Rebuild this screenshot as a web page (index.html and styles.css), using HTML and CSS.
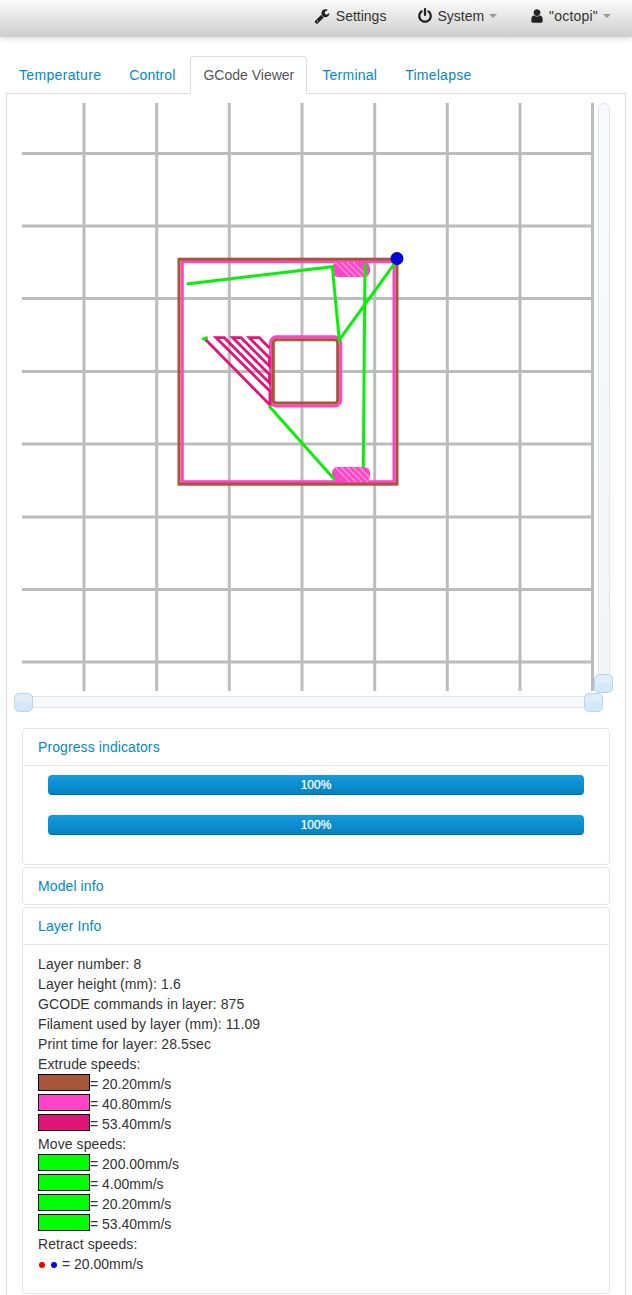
FILE: index.html
```html
<!DOCTYPE html>
<html lang="en">
<head>
<meta charset="utf-8">
<title>OctoPrint</title>
<link rel="stylesheet" href="styles.css">
</head>
<body>
<header class="navbar">
  <a class="nav-item nav-settings"><svg class="icon" viewBox="0 0 1792 1792"><path d="M448 1472q0-26-19-45t-45-19-45 19-19 45 19 45 45 19 45-19 19-45zm644-420l-682 682q-37 37-90 37-52 0-91-37l-106-108q-38-36-38-90 0-53 38-91l681-681q39 98 114.5 173.5t173.5 114.5zm634-435q0 39-23 106-47 134-164.5 217.5t-258.5 83.5q-185 0-316.5-131.5t-131.5-316.5 131.5-316.5 316.5-131.5q58 0 121.5 16.5t107.5 46.5q16 11 16 28t-16 28l-293 169v224l193 107q5-3 79-48.5t135.5-81 70.5-35.5q15 0 23.5 10t8.5 25z"/></svg>Settings</a>
  <a class="nav-item nav-system"><svg class="icon" viewBox="0 0 1792 1792"><path d="M1664 896q0 156-61 298t-164 245-245 164-298 61-298-61-245-164-164-245-61-298q0-182 80.5-343t226.5-270q43-32 95.5-25t83.5 50q32 42 24.5 94.5t-49.5 84.5q-98 74-151.5 181t-53.5 228q0 104 40.5 198.5t109.5 163.5 163.5 109.5 198.5 40.5 198.5-40.5 163.5-109.5 109.5-163.5 40.5-198.5q0-121-53.5-228t-151.5-181q-42-32-49.5-84.5t24.5-94.5q31-43 84-50t95 25q146 109 226.5 270t80.5 343zm-640-768v640q0 52-38 90t-90 38-90-38-38-90v-640q0-52 38-90t90-38 90 38 38 90z"/></svg>System<span class="caret"></span></a>
  <a class="nav-item nav-user"><svg class="icon" viewBox="0 0 1792 1792"><path d="M1536 1399q0 109-62.5 187t-150.5 78h-854q-88 0-150.5-78t-62.5-187q0-85 8.5-160.5t31.5-152 58.5-131 94-89 134.5-34.5q131 128 313 128t313-128q76 0 134.5 34.5t94 89 58.5 131 31.5 152 8.5 160.5zm-256-887q0 159-112.5 271.5t-271.5 112.5-271.5-112.5-112.5-271.5 112.5-271.5 271.5-112.5 271.5 112.5 112.5 271.5z"/></svg><span class="user-name">"octopi"</span><span class="caret"></span></a>
</header>

<main class="page">
  <ul class="tabs">
    <li><a class="tab tab-first">Temperature</a></li>
    <li><a class="tab tab-control">Control</a></li>
    <li><a class="tab tab-active">GCode Viewer</a></li>
    <li><a class="tab">Terminal</a></li>
    <li><a class="tab">Timelapse</a></li>
  </ul>

  <section class="tab-content">
    <div class="viewer">
      <svg class="canvas" viewBox="22 103 572 588" width="572" height="588">
        <g class="grid">
          <path d="M84 103V691M156.7 103V691M229.3 103V691M302 103V691M374.7 103V691M447.3 103V691M520 103V691M592.5 103V691"/>
          <path d="M22 153.5H592M22 226H592M22 298.5H592M22 371.5H592M22 444H592M22 517H592M22 589.5H592M22 662H592"/>
        </g>
        <g class="pink">
          <rect x="182.3" y="261.7" width="211.700" height="220"/>
          <rect x="270.500" y="336.700" width="70.200" height="69.300" rx="6"/>
        </g>
        <g class="brown">
          <rect x="179" y="259.200" width="218" height="225"/>
          <rect x="273.300" y="339.800" width="64.400" height="63.200" rx="3"/>
        </g>
        <path class="hatch" d="M204.300 338.300L270 405V391.200L216 337.700H224.300L269.500 382.900V374.500L232.700 337.700H241L269.500 366.200V357.900L249.300 337.700H259.300L269.500 347.900"/>
        <rect class="blob" x="332" y="262" width="38" height="15" rx="6"/>
        <rect class="blob" x="332" y="467" width="38" height="15" rx="6"/>
        <path class="blob-lines" d="M335 262L350 277M341 262L356 277M347 262L362 277M353 262L368 277M335 467L350 482M341 467L356 482M347 467L362 482M353 467L368 482M359 467L370 478"/>
        <path class="move" d="M202 339.300L207.700 337.300M186.700 284L332.300 266.700L339.300 340L398.300 258.300M365 263.300L363.300 467M269 406L335 480"/>
        <circle class="retract" cx="397" cy="258.500" r="6.500"/>
      </svg>
      <div class="vslider"><span class="handle handle-v"></span></div>
    </div>
    <div class="hslider"><span class="handle handle-h-left"></span><span class="handle handle-h-right"></span></div>

    <div class="accordion">
      <div class="group">
        <a class="group-heading">Progress indicators</a>
        <div class="group-inner">
          <div class="progress"><div class="bar">100%</div></div>
          <div class="progress"><div class="bar">100%</div></div>
        </div>
      </div>
      <div class="group">
        <a class="group-heading">Model info</a>
      </div>
      <div class="group">
        <a class="group-heading">Layer Info</a>
        <div class="group-inner">
          <div class="info">
            <div>Layer number: 8</div>
            <div>Layer height (mm): 1.6</div>
            <div>GCODE commands in layer: 875</div>
            <div>Filament used by layer (mm): 11.09</div>
            <div>Print time for layer: 28.5sec</div>
            <div>Extrude speeds:</div>
            <div class="speed"><span class="swatch swatch-brown"></span>= 20.20mm/s</div>
            <div class="speed"><span class="swatch swatch-pink"></span>= 40.80mm/s</div>
            <div class="speed"><span class="swatch swatch-magenta"></span>= 53.40mm/s</div>
            <div>Move speeds:</div>
            <div class="speed"><span class="swatch swatch-green"></span>= 200.00mm/s</div>
            <div class="speed"><span class="swatch swatch-green"></span>= 4.00mm/s</div>
            <div class="speed"><span class="swatch swatch-green"></span>= 20.20mm/s</div>
            <div class="speed"><span class="swatch swatch-green"></span>= 53.40mm/s</div>
            <div>Retract speeds:</div>
            <div class="speed speed-retract"><span class="dot dot-red"></span><span class="dot dot-blue"></span>= 20.00mm/s</div>
          </div>
        </div>
      </div>
    </div>
  </section>
</main>
</body>
</html>
```
FILE: styles.css
```css
html {
  overflow: hidden;
}

body {
  margin: 0;
  background: #fff;
  font-family: "Liberation Sans", Arial, sans-serif;
  font-size: 14px;
  line-height: 20px;
  color: #333;
}

.navbar {
  display: flex;
  justify-content: flex-end;
  align-items: center;
  height: 37px;
  padding: 0 21px 5px 0;
  box-sizing: border-box;
  background: linear-gradient(to bottom, #fbfbfb, #cdcdcd);
  box-shadow: 0 1px 6px rgba(0, 0, 0, 0.18);
}

.nav-item {
  display: flex;
  align-items: center;
  color: #333;
}

.nav-system {
  margin-left: 32px;
}

.nav-user {
  margin-left: 33px;
}

.user-name {
  letter-spacing: 0.2px;
}

.icon {
  width: 16px;
  height: 16px;
  margin-right: 5px;
  fill: #222;
}

.nav-settings .icon {
  margin-right: 6px;
}

.nav-system .icon {
  margin-right: 4px;
  margin-left: -1px;
}

.nav-user .icon {
  margin-right: 4px;
  margin-left: -1px;
}

.caret {
  width: 0;
  height: 0;
  margin-left: 5px;
  border-top: 4px solid #999;
  border-left: 4px solid transparent;
  border-right: 4px solid transparent;
}

.page {
  padding-top: 19px;
}

.tabs {
  display: flex;
  gap: 2px;
  margin: 0 6px -1px;
  padding: 0;
  list-style: none;
  position: relative;
}

.tab {
  display: block;
  padding: 8px 12px;
  border: 1px solid transparent;
  border-radius: 4px 4px 0 0;
  color: #0088cc;
  letter-spacing: 0.25px;
}

.tab-first {
  letter-spacing: 0.34px;
}

.tab-control {
  letter-spacing: 0.14px;
}

.tab-active {
  color: #555;
  background: #fff;
  border-color: #ddd #ddd #fff;
  letter-spacing: 0;
}

.tab-content {
  margin: 0 6px;
  padding: 9px 15px 20px;
  border: 1px solid #ddd;
}

.viewer {
  display: flex;
  align-items: flex-start;
  gap: 4px;
}

.canvas {
  display: block;
  flex: none;
}

.grid path {
  fill: none;
  stroke: #bcbcbc;
  stroke-width: 3;
}

.pink rect {
  fill: none;
  stroke: #ff44c8;
  stroke-width: 3;
}

.brown rect {
  fill: none;
  stroke: #a8553a;
  stroke-width: 3;
}

.hatch {
  fill: none;
  stroke: #e0147a;
  stroke-width: 2.8;
}

.blob {
  fill: #ff44c8;
}

.blob-lines {
  fill: none;
  stroke: #ff8fdc;
  stroke-width: 1.5;
}

.move {
  fill: none;
  stroke: #0aef0a;
  stroke-width: 3;
}

.retract {
  fill: #0000d8;
}

.vslider {
  position: relative;
  flex: none;
  width: 12px;
  height: 582px;
  box-sizing: border-box;
  border: 1px solid #e3e6ea;
  border-radius: 6px;
  background: linear-gradient(to bottom, #f9fafc, #f2f5f9);
}

.hslider {
  position: relative;
  width: 572px;
  height: 12px;
  margin-top: 5px;
  box-sizing: border-box;
  border: 1px solid #e0e3e7;
  background: #f6f8fa;
}

.handle {
  position: absolute;
  width: 19px;
  height: 19px;
  box-sizing: border-box;
  border: 1px solid #b7d5ec;
  border-radius: 5px;
  background: linear-gradient(to bottom, #e0eefa 50%, #d5e8f7 50%);
}

.handle-v {
  left: -5px;
  top: 570px;
}

.handle-h-left {
  left: -9px;
  top: -4px;
}

.handle-h-right {
  left: 561px;
  top: -4px;
}

.accordion {
  margin-top: 20px;
}

.group {
  margin-bottom: 2px;
  border: 1px solid #e5e5e5;
  border-radius: 4px;
}

.group-heading {
  display: block;
  padding: 8px 15px;
  color: #0088cc;
  letter-spacing: 0.1px;
}

.group-inner {
  padding: 9px 15px;
  border-top: 1px solid #e5e5e5;
}

.progress {
  height: 20px;
  margin: 0 10px 20px;
  border-radius: 4px;
  overflow: hidden;
}

.bar {
  height: 20px;
  background: linear-gradient(to bottom, #149bdf, #0480be);
  box-shadow: inset 0 -1px 0 rgba(0, 0, 0, 0.15);
  color: #fff;
  font-size: 12px;
  line-height: 20px;
  text-align: center;
  text-shadow: 0 0 1px rgba(255, 255, 255, 0.7);
}

.info {
  margin-bottom: 10px;
  letter-spacing: 0.09px;
}

.speed {
  display: flex;
  align-items: flex-start;
  letter-spacing: 0;
}

.speed-retract {
  align-items: center;
}

.swatch {
  display: block;
  flex: none;
  width: 52px;
  height: 17px;
  box-sizing: border-box;
  border: 1px solid #000;
}

.swatch-brown {
  background: #a8553a;
}

.swatch-pink {
  background: #ff44c8;
}

.swatch-magenta {
  background: #e0147a;
}

.swatch-green {
  background: #00ff00;
}

.dot {
  display: block;
  flex: none;
  width: 6px;
  height: 6px;
  margin: 1px 5px 0 1px;
  border-radius: 50%;
}

.dot-red {
  background: #f00000;
}

.dot-blue {
  background: #0000f0;
}
```
